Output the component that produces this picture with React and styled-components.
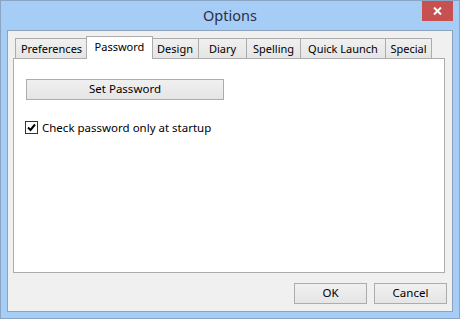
import React from 'react';
import styled, { createGlobalStyle } from 'styled-components';

const GlobalStyle = createGlobalStyle`
  html, body {
    margin: 0;
    padding: 0;
    background: #ffffff;
  }
  * {
    box-sizing: border-box;
  }
`;

const Window = styled.div`
  width: 460px;
  height: 319px;
  display: flex;
  flex-direction: column;
  padding: 0 6px 6px;
  background: #a5cdf5;
  border: 1px solid #8aa5c4;
  font-family: "Noto Sans", "Segoe UI", sans-serif;
  font-size: 11px;
  color: #000;
`;

const TitleBar = styled.div`
  height: 29px;
  display: grid;
  grid-template-columns: 1fr auto 1fr;
  align-items: start;
`;

const Title = styled.div`
  grid-column: 2;
  padding-top: 4px;
  font-size: 14.5px;
  color: #2e2e44;
  line-height: 20px;
`;

const CloseButton = styled.div`
  grid-column: 3;
  justify-self: end;
  width: 31px;
  height: 20px;
  display: flex;
  align-items: center;
  justify-content: center;
  background: #c75050;
`;

const Client = styled.div`
  flex: 1;
  display: flex;
  flex-direction: column;
  background: #f0f0f0;
  border: 1px solid #8da3bd;
  padding: 5px 7px 0 5px;
`;

const TabStrip = styled.div`
  display: flex;
  align-items: flex-end;
  height: 22px;
  padding-left: 2px;
`;

const Tab = styled.div`
  width: ${p => p.$w}px;
  height: ${p => (p.$active ? 23 : 20)}px;
  margin-left: ${p => p.$ml}px;
  margin-bottom: ${p => (p.$active ? -1 : 0)}px;
  position: relative;
  z-index: ${p => (p.$active ? 2 : 1)};
  display: flex;
  align-items: center;
  justify-content: center;
  padding-bottom: ${p => (p.$active ? 3 : 0)}px;
  border: 1px solid #acacac;
  border-bottom: none;
  background: ${p => (p.$active ? '#ffffff' : 'linear-gradient(#f0f0f0, #e5e5e5)')};
  white-space: nowrap;
`;

const Panel = styled.div`
  height: 215px;
  background: #ffffff;
  border: 1px solid #acacac;
  display: flex;
  flex-direction: column;
  align-items: flex-start;
  padding: 20px 0 0 11px;
`;

const Button = styled.button`
  width: ${p => p.$w}px;
  height: 21px;
  margin-left: ${p => p.$ml || 0}px;
  padding: 0 0 1px;
  border: 1px solid #acacac;
  background: linear-gradient(#f0f0f0, #e5e5e5);
  font-family: inherit;
  font-size: 11.5px;
  color: #000;
  line-height: 18px;
`;

const CheckRow = styled.label`
  display: flex;
  align-items: center;
  gap: 4px;
  margin-top: 21px;
  line-height: 13px;
  font-size: 11.5px;
`;

const Box = styled.span`
  width: 13px;
  height: 13px;
  border: 1px solid #333333;
  background: #ffffff;
  display: flex;
  align-items: center;
  justify-content: center;
`;

const Footer = styled.div`
  display: flex;
  justify-content: flex-end;
  gap: 7px;
  padding: 10px 0 7px;
  margin-right: -2px;
`;

const tabs = [
  { label: 'Preferences', w: 73, ml: 0 },
  { label: 'Password', w: 67, ml: -2, active: true },
  { label: 'Design', w: 48, ml: -2 },
  { label: 'Diary', w: 49, ml: -1 },
  { label: 'Spelling', w: 55, ml: -1 },
  { label: 'Quick Launch', w: 86, ml: -1 },
  { label: 'Special', w: 47, ml: -1 },
];

export default function App() {
  return (
    <>
      <GlobalStyle />
      <Window>
        <TitleBar>
          <Title>Options</Title>
          <CloseButton>
            <svg width="9" height="8" viewBox="0 0 9 8">
              <path d="M1 0.5 L8 7.5 M8 0.5 L1 7.5" stroke="#fff" strokeWidth="2" />
            </svg>
          </CloseButton>
        </TitleBar>
        <Client>
          <TabStrip>
            {tabs.map(t => (
              <Tab key={t.label} $w={t.w} $ml={t.ml} $active={t.active}>
                {t.label}
              </Tab>
            ))}
          </TabStrip>
          <Panel>
            <Button $w={198} $ml={1}>Set Password</Button>
            <CheckRow>
              <Box>
                <svg width="9" height="9" viewBox="0 0 9 9">
                  <path d="M1 4.5 L3.5 7 L8 1.5" stroke="#000" strokeWidth="2" fill="none" />
                </svg>
              </Box>
              Check password only at startup
            </CheckRow>
          </Panel>
          <Footer>
            <Button $w={73}>OK</Button>
            <Button $w={73}>Cancel</Button>
          </Footer>
        </Client>
      </Window>
    </>
  );
}
